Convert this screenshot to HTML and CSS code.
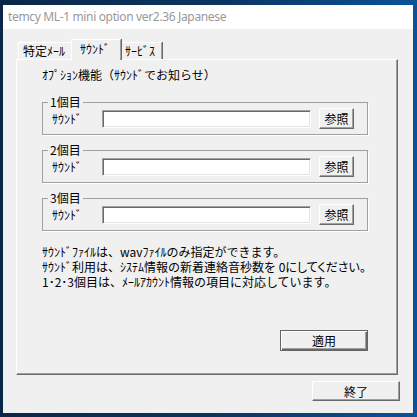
FILE: index.html
```html
<!DOCTYPE html>
<html lang="ja">
<head>
    <meta charset="UTF-8">
    <title>temcy ML-1 mini option ver2.36 Japanese</title>
    <link rel="stylesheet" href="styles.css">
</head>
<body>

    <!-- Window -->
    <div class="window">
        <div class="titlebar">temcy ML-1 mini option ver2.36 Japanese</div>

        <div class="client">
            <div class="tabs">
                <div class="tab">特定ﾒｰﾙ</div>
                <div class="tab active">ｻｳﾝﾄﾞ</div>
                <div class="tab">ｻｰﾋﾞｽ</div>
            </div>

            <div class="panel">
                <p class="caption">ｵﾌﾟｼｮﾝ機能（ｻｳﾝﾄﾞでお知らせ）</p>

                <fieldset class="group">
                    <legend>1個目</legend>
                    <div class="row">
                        <span class="label">ｻｳﾝﾄﾞ</span>
                        <input type="text" class="path">
                        <button class="btn browse">参照</button>
                    </div>
                </fieldset>

                <fieldset class="group">
                    <legend>2個目</legend>
                    <div class="row">
                        <span class="label">ｻｳﾝﾄﾞ</span>
                        <input type="text" class="path">
                        <button class="btn browse">参照</button>
                    </div>
                </fieldset>

                <fieldset class="group">
                    <legend>3個目</legend>
                    <div class="row">
                        <span class="label">ｻｳﾝﾄﾞ</span>
                        <input type="text" class="path">
                        <button class="btn browse">参照</button>
                    </div>
                </fieldset>

                <div class="notes">
                    <p>ｻｳﾝﾄﾞﾌｧｲﾙは、wavﾌｧｲﾙのみ指定ができます。</p>
                    <p>ｻｳﾝﾄﾞ利用は、ｼｽﾃﾑ情報の新着連絡音秒数を 0<span class="prop">にしてください。</span></p>
                    <p>1･2･3個目は、ﾒｰﾙｱｶｳﾝﾄ情報の項目に対応しています。</p>
                </div>

                <div class="apply-row">
                    <button class="btn wide default">適用</button>
                </div>
            </div>

            <div class="footer">
                <button class="btn wide">終了</button>
            </div>
        </div>
    </div>

</body>
</html>
```

FILE: styles.css
```css
html, body {
    margin: 0;
    padding: 0;
}

body {
    width: 417px;
    height: 417px;
    overflow: hidden;
    background: linear-gradient(90deg, #0b2747 0%, #0c3563 55%, #0b5399 100%);
    font-family: "Noto Sans CJK JP", sans-serif;
    font-size: 12px;
    color: #000;
}

/* Window */
.window {
    margin: 5px 0 0 3px;
    width: 410px;
    height: 408px;
    display: flex;
    flex-direction: column;
    background: #f0f0f0;
}

.titlebar {
    height: 25px;
    line-height: 24px;
    padding-left: 5px;
    background: #fff;
    color: #999;
    font-family: "Noto Sans", sans-serif;
    font-size: 12px;
    letter-spacing: -0.35px;
}

.client {
    flex: 1;
    display: flex;
    flex-direction: column;
    padding: 10px 0 12px 13px;
}

/* Tabs */
.tabs {
    display: flex;
    align-items: flex-end;
    height: 20px;
    padding-left: 2px;
}

.tab {
    height: 17px;
    line-height: 16px;
    padding: 0 0 0 4px;
    box-sizing: border-box;
    border-top: 1px solid #fff;
    border-left: 1px solid #fff;
    border-right: 1px solid #a0a0a0;
    box-shadow: 1px 0 0 #696969;
    white-space: nowrap;
    overflow: hidden;
}

.tab:first-child {
    width: 55px;
}

.tab:last-child {
    width: 43px;
    padding-left: 5px;
}

.tab.active {
    position: relative;
    z-index: 1;
    width: 50px;
    height: 21px;
    line-height: 18px;
    margin: 0 -2px -1px -2px;
    padding-left: 8px;
    background: #f0f0f0;
}

/* Panel */
.panel {
    width: 382px;
    height: 316px;
    box-sizing: border-box;
    display: flex;
    flex-direction: column;
    padding: 8px 29px 23px 25px;
    border-top: 1px solid #fff;
    border-left: 1px solid #fff;
    border-right: 1px solid #696969;
    border-bottom: 1px solid #696969;
    box-shadow: inset -1px -1px 0 #a0a0a0;
}

.caption {
    margin: 0;
    line-height: 14px;
}

.group {
    margin: 8px 0 0 0;
    padding: 0 12px 5px 9px;
    border: 1px solid #a0a0a0;
    box-shadow: 1px 1px 0 #fff;
}

.group:first-of-type {
    margin-top: 13px;
}

.group legend {
    padding: 0 2px;
    margin-left: -4px;
    line-height: 14px;
}

.row {
    display: flex;
    align-items: center;
    height: 21px;
    margin-top: -1px;
}

.label {
    width: 50px;
}

.path {
    width: 209px;
    height: 18px;
    box-sizing: border-box;
    margin: 0 8px 0 0;
    padding: 0 2px;
    border: 1px solid;
    border-color: #a0a0a0 #fff #fff #a0a0a0;
    box-shadow: inset 1px 1px 0 #696969, inset -1px -1px 0 #e3e3e3;
    background: #fff;
    outline: none;
}

/* Buttons */
.btn {
    height: 21px;
    box-sizing: border-box;
    padding: 0;
    background: #f0f0f0;
    border: 1px solid;
    border-color: #fff #696969 #696969 #fff;
    box-shadow: inset -1px -1px 0 #a0a0a0;
    font-family: "Noto Sans CJK JP", sans-serif;
    font-size: 12px;
    color: #000;
}

.browse {
    width: 35px;
}

.wide {
    width: 88px;
}

.btn.default {
    border-color: #646464;
    box-shadow: inset 1px 1px 0 #fff, inset -1px -1px 0 #696969, inset -2px -2px 0 #a0a0a0;
}

.notes {
    margin-top: 13px;
}

.notes p {
    margin: 0;
    line-height: 15px;
    white-space: nowrap;
}

.prop {
    font-feature-settings: "palt";
}

.apply-row {
    margin-top: auto;
    display: flex;
    justify-content: flex-end;
}

.footer {
    display: flex;
    justify-content: flex-end;
    padding: 6px 13px 0 0;
}

.footer .btn {
    height: 20px;
}
```
